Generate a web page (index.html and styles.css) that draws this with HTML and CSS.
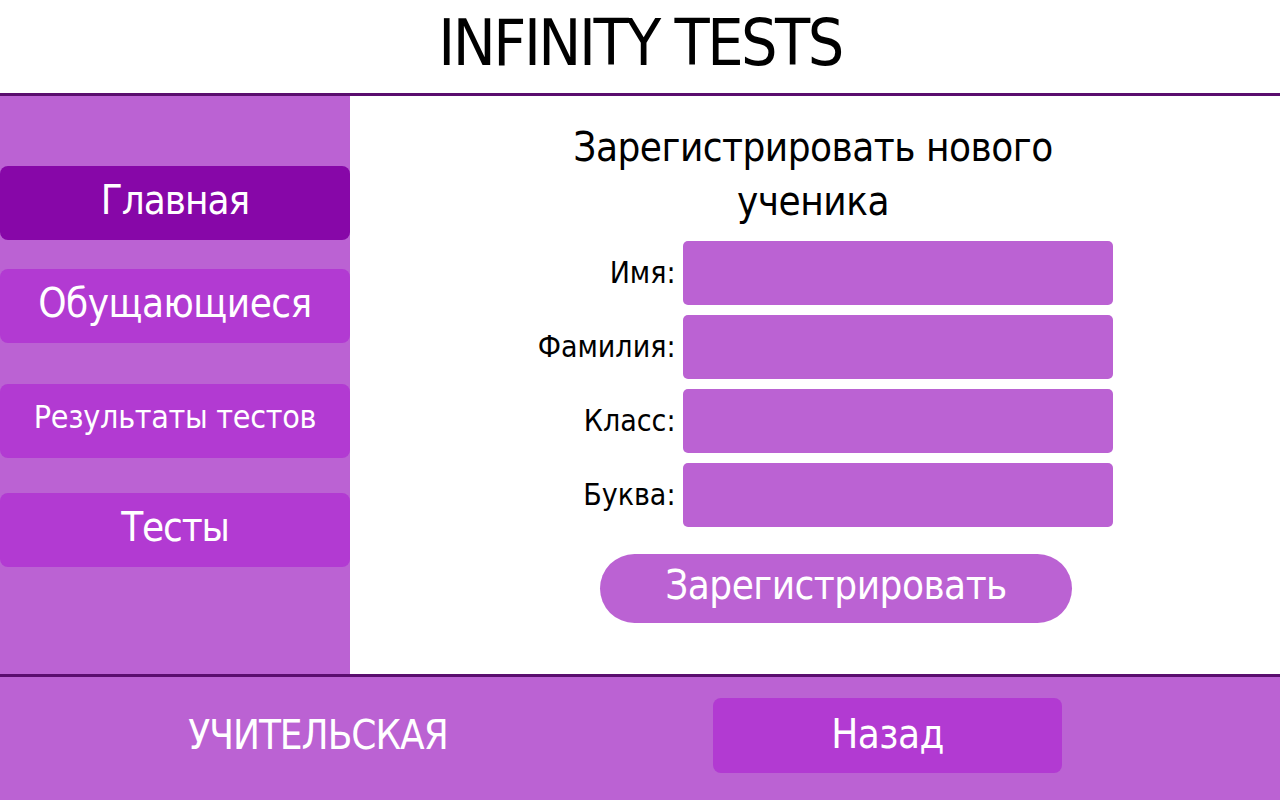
FILE: index.html
```html
<!DOCTYPE html>
<html lang="ru">
<head>
<meta charset="utf-8">
<title>Infinity Tests</title>
<link rel="stylesheet" href="styles.css">
</head>
<body>
<div class="app">
  <header class="header">
    <h1 class="logo">INFINITY TESTS</h1>
  </header>
  <div class="middle">
    <nav class="sidebar">
      <a class="nav-btn nav-active">Главная</a>
      <a class="nav-btn nav-second">Обущающиеся</a>
      <a class="nav-btn nav-small">Результаты тестов</a>
      <a class="nav-btn nav-last">Тесты</a>
    </nav>
    <main class="content">
      <h2 class="form-title">Зарегистрировать нового ученика</h2>
      <form class="form">
        <div class="row"><label class="label">Имя:</label><div class="field"></div></div>
        <div class="row"><label class="label">Фамилия:</label><div class="field"></div></div>
        <div class="row"><label class="label">Класс:</label><div class="field"></div></div>
        <div class="row"><label class="label">Буква:</label><div class="field"></div></div>
      </form>
      <button class="submit" type="button">Зарегистрировать</button>
    </main>
  </div>
  <footer class="footer">
    <div class="footer-title">УЧИТЕЛЬСКАЯ</div>
    <div class="footer-side"><a class="back-btn">Назад</a></div>
  </footer>
</div>
</body>
</html>
```
FILE: styles.css
```css
* { box-sizing: border-box; }
html, body { margin: 0; padding: 0; }
body {
  font-family: "DejaVu Sans Condensed", "DejaVu Sans", sans-serif;
  font-stretch: condensed;
  background: #ffffff;
  color: #000;
}
.app {
  width: 1280px;
  height: 800px;
  display: flex;
  flex-direction: column;
}
.header {
  height: 96px;
  border-bottom: 3px solid #5a0d6e;
  display: flex;
  align-items: center;
  justify-content: center;
  padding-bottom: 8px;
}
.logo {
  margin: 0;
  font-weight: normal;
  font-size: 64px;
  letter-spacing: -2.5px;
  line-height: 1;
}
.middle {
  height: 578px;
  display: flex;
}
.sidebar {
  width: 350px;
  background: #bb62d3;
  display: flex;
  flex-direction: column;
  padding-top: 70px;
}
.nav-btn {
  height: 74px;
  border-radius: 8px;
  background: #b23ad2;
  color: #fff;
  display: flex;
  align-items: center;
  justify-content: center;
  font-size: 40px;
  letter-spacing: -0.5px;
  padding-bottom: 6px;
}
.nav-active {
  background: #8707a8;
  letter-spacing: -1px;
  margin-bottom: 29px;
}
.nav-second { margin-bottom: 41px; }
.nav-small {
  font-size: 32px;
  letter-spacing: -0.3px;
  margin-bottom: 35px;
  padding-bottom: 9px;
}
.nav-last { letter-spacing: -1.2px; }
.content {
  flex: 1;
  display: flex;
  flex-direction: column;
  align-items: center;
  padding-top: 24px;
}
.form-title {
  margin: 0;
  width: 500px;
  text-align: center;
  font-weight: normal;
  font-size: 40px;
  letter-spacing: -0.5px;
  line-height: 54px;
  margin-left: -4px;
}
.form {
  margin: 13px 0 0 8px;
  display: flex;
  flex-direction: column;
  gap: 10px;
}
.row {
  display: flex;
  align-items: center;
  gap: 7px;
}
.label {
  width: 150px;
  text-align: right;
  font-size: 30px;
  padding-bottom: 2px;
}
.field {
  width: 430px;
  height: 64px;
  background: #bb62d3;
  border-radius: 5px;
}
.submit {
  margin: 27px 0 0 42px;
  width: 472px;
  height: 69px;
  border: none;
  border-radius: 35px;
  background: #bb62d3;
  color: #fff;
  font-family: inherit;
  font-stretch: condensed;
  font-size: 40px;
  letter-spacing: -0.5px;
  padding: 0 0 8px 0;
}
.footer {
  flex: 1;
  border-top: 3px solid #5a0d6e;
  background: #bb62d3;
  display: flex;
  align-items: center;
  padding-bottom: 6px;
}
.footer-title {
  width: 636px;
  text-align: center;
  color: #fff;
  font-size: 40px;
  letter-spacing: -1px;
  padding-bottom: 2px;
}
.footer-side {
  flex: 1;
  display: flex;
  padding-left: 77px;
}
.back-btn {
  width: 349px;
  height: 75px;
  border-radius: 8px;
  background: #b23ad2;
  color: #fff;
  font-size: 40px;
  letter-spacing: -0.5px;
  display: flex;
  align-items: center;
  justify-content: center;
  padding-bottom: 4px;
}
```
